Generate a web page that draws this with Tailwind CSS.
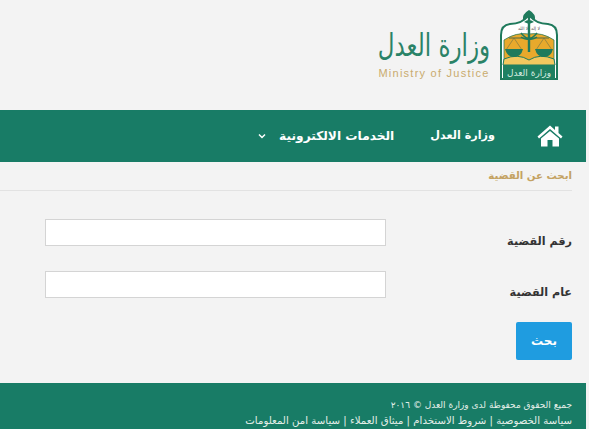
<!DOCTYPE html>
<html dir="rtl" lang="ar">
<head>
<meta charset="utf-8">
<script src="https://cdn.jsdelivr.net/npm/@tailwindcss/browser@4"></script>
</head>
<body class="w-[589px] h-[429px] overflow-hidden bg-[#f3f3f3] font-['DejaVu_Sans',sans-serif]">
<div class="h-[110px] flex items-start pr-[31px] pt-[10px] gap-[10px]">
  <svg class="w-[58px] h-[70px] shrink-0" viewBox="0 0 58 70">
    <path d="M1 69V25Q1 15 10 14Q22 14 29 5Q36 14 48 14Q57 15 57 25V69Z" fill="#fff" stroke="#1f7a5c" stroke-width="2"/>
    <path d="M4 52V30Q16 22 29 24Q42 22 54 30V52Z" fill="#e8a92c" stroke="#2c7a58" stroke-width=".8"/>
    <text x="29" y="20" text-anchor="middle" font-size="4.500" fill="#555" font-family="DejaVu Sans">لا إله إلا الله</text>
    <path d="M4 49Q18 43 29 50Q40 43 54 49L55 55H3Z" fill="#f2c85f" stroke="#1f7a5c" stroke-width="1"/>
    <path d="M9 28H49" stroke="#4e6b45" stroke-width="1.200"/>
    <path d="M14 28L6 40M14 28L22 40M44 28L36 40M44 28L52 40" stroke="#6b7046" stroke-width=".6"/>
    <path d="M5 39H23Q21 47 14 47Q7 47 5 39ZM35 39H53Q51 47 44 47Q37 47 35 39Z" fill="#1f7a5c"/>
    <path d="M29 4V42" stroke="#1f7a5c" stroke-width="2.400"/>
    <path d="M21 23Q29 33 37 27M37 23Q29 33 21 27" stroke="#1f7a5c" stroke-width="1.500" fill="none"/>
    <path d="M29 0Q36 4 35 10L29 7L23 10Q22 4 29 0ZM24 12Q29 8 34 12L29 14Z" fill="#1f7a5c"/>
    <rect x="3" y="55" width="52" height="14" fill="#1f8061"/>
    <text x="29" y="66" text-anchor="middle" font-size="9" fill="#d5ebe0" font-family="DejaVu Sans">وزارة العدل</text>
  </svg>
  <div class="w-[112px] flex flex-col items-center pt-[20px]">
    <div class="text-[23px] leading-[30px] scale-y-[1.35] text-[#2a8267] whitespace-nowrap">وزارة العدل</div>
    <div dir="ltr" class="text-[11px] leading-[12px] mt-[7px] tracking-[1.25px] text-[#c9ab6e] whitespace-nowrap font-['Liberation_Sans',sans-serif]">Ministry of Justice</div>
  </div>
</div>
<nav class="h-[52px] w-[586px] mr-[3px] bg-[#187c66] flex items-center text-white font-bold">
  <svg class="w-[26px] h-[22px] mr-[23px] ml-[42px]" viewBox="0 0 26 22" fill="#fff">
    <path d="M13 0.5L0.5 11.5L2 13.5L13 4L24 13.5L25.500 11.5L21.500 8V1.5H18V5Z"/>
    <path d="M13 6L4 13.5V21.5H10.5V15H15.500V21.5H22V13.5Z"/>
  </svg>
  <span class="ml-[36px] whitespace-nowrap text-[11.2px]">وزارة العدل</span>
  <span class="ml-[13px] whitespace-nowrap text-[12.2px]">الخدمات الالكترونية</span>
  <svg class="w-[8px] h-[6px]" viewBox="0 0 8 6" fill="none" stroke="#fff" stroke-width="1.500"><path d="M1 1.5L4 4.5L7 1.5"/></svg>
</nav>
<div class="mr-[17px] h-[29px] border-b border-[#e2e2e2] text-[10.2px] leading-[28px] font-bold text-[#c4a262]">ابحث عن القضية</div>
<form class="pr-[17px] pl-[45px] pt-[28px] flex flex-col">
  <div class="flex items-start justify-between h-[52px]">
    <label class="text-[11.2px] font-bold text-[#333] mt-[13px] leading-[20px]">رقم القضية</label>
    <input class="w-[341px] h-[27px] bg-white border border-[#d4d4d4]">
  </div>
  <div class="flex items-start justify-between h-[51px]">
    <label class="text-[11.2px] font-bold text-[#333] mt-[12px] leading-[20px]">عام القضية</label>
    <input class="w-[341px] h-[27px] bg-white border border-[#d4d4d4]">
  </div>
  <button type="button" class="self-start w-[56px] h-[38px] bg-[#1f9ce0] text-white text-[12px] font-bold rounded-[2px]">بحث</button>
</form>
<footer class="mt-[23px] w-[586px] mr-[3px] h-[46px] bg-[#187c66] text-[#e4efe9] leading-[16px] pr-[14px] pt-[14px]">
  <div class="text-[9px]">جميع الحقوق محفوظة لدى وزارة العدل © ٢٠١٦</div>
  <div class="text-[10.2px]">سياسة الخصوصية | شروط الاستخدام | ميثاق العملاء | سياسة امن المعلومات</div>
</footer>
</body>
</html>
